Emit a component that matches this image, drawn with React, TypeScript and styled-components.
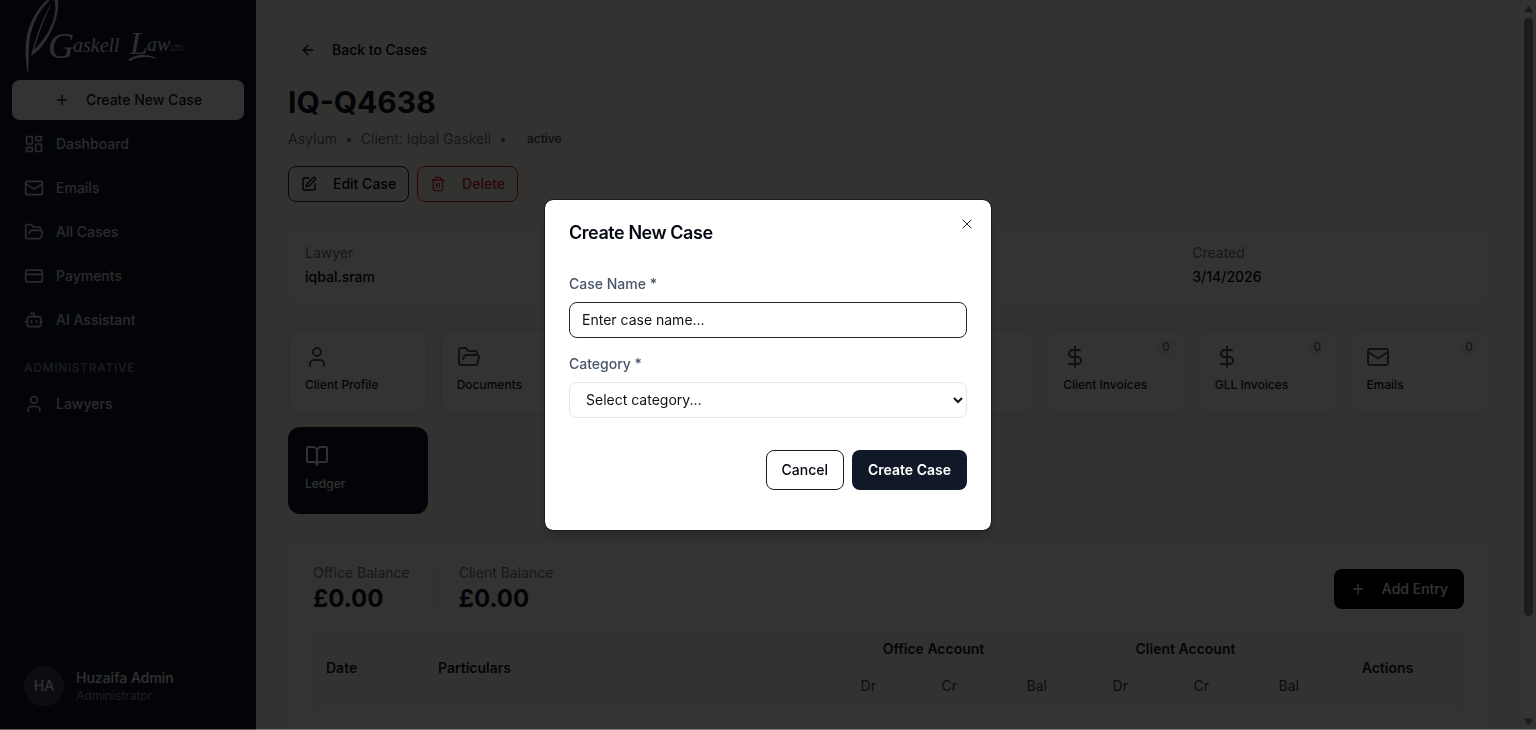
import React from "react";
import styled, { createGlobalStyle, css } from "styled-components";
import {
  ArrowLeft,
  BookOpen,
  Bot,
  CreditCard,
  DollarSign,
  FolderOpen,
  LayoutDashboard,
  Mail,
  Plus,
  SquarePen,
  Trash2,
  User,
  X,
  type LucideIcon,
} from "lucide-react";

const GlobalStyle = createGlobalStyle`
  *, *::before, *::after { box-sizing: border-box; }
  body {
    margin: 0;
    background: #faf9f5;
    color: #111827;
    font-family: Inter, "Liberation Sans", sans-serif;
    font-size: 14px;
    line-height: 20px;
  }
  button, input, select { font: inherit; color: inherit; }
  button { cursor: pointer; }
  h1, h2, p, dl, dd { margin: 0; }
`;

const Shell = styled.div`
  display: flex;
  height: 100vh;
  overflow: hidden;
`;

/* ---------- Sidebar ---------- */

const Sidebar = styled.aside`
  display: flex;
  flex-direction: column;
  flex: 0 0 256px;
  background: #111827;
  color: #d1d5db;
`;

const Brand = styled.div`
  height: 64px;
  padding-left: 24px;
  border-bottom: 1px solid #1a2231;
`;

const LogoArt = styled.svg`
  display: block;
  overflow: visible;
`;

const Nav = styled.nav`
  display: flex;
  flex-direction: column;
  flex: 1;
  gap: 4px;
  padding: 16px 12px;
`;

const NavLink = styled.a`
  display: flex;
  align-items: center;
  gap: 12px;
  height: 40px;
  padding: 0 12px;
  border-radius: 8px;
  color: #d1d5db;
  font-weight: 500;
  text-decoration: none;
`;

const NavHeading = styled.h2`
  padding: 16px 12px 4px;
  color: #7c8492;
  font-size: 12px;
  line-height: 16px;
  font-weight: 600;
  letter-spacing: 0.05em;
  text-transform: uppercase;
`;

const Account = styled.div`
  display: flex;
  align-items: center;
  gap: 12px;
  padding: 24px;
  border-top: 1px solid #1f2937;
`;

const Avatar = styled.div`
  display: grid;
  place-items: center;
  width: 40px;
  height: 40px;
  border-radius: 50%;
  background: #374151;
  color: #f3f4f6;
  font-weight: 500;
`;

const AccountName = styled.p`
  color: #f3f4f6;
  font-weight: 500;
`;

const AccountRole = styled.p`
  color: #8b93a1;
  font-size: 12px;
  line-height: 16px;
`;

/* ---------- Buttons ---------- */

type Tone = "light" | "ghost" | "outline" | "danger" | "black" | "navy";

const tones = {
  light: css`background: #ffffff; color: #111827;`,
  ghost: css`background: transparent; color: #030712;`,
  outline: css`background: transparent; border-color: #1c1c1c; color: #030712;`,
  danger: css`background: transparent; border-color: #dc2626; color: #dc2626;`,
  black: css`background: #000000; color: #ffffff;`,
  navy: css`background: #111827; color: #ffffff; font-weight: 600;`,
};

const Button = styled.button<{ $tone: Tone; $small?: boolean }>`
  display: inline-flex;
  align-items: center;
  justify-content: center;
  flex-shrink: 0;
  gap: 16px;
  height: ${(p) => (p.$small ? 36 : 40)}px;
  padding: 0 ${(p) => (p.$small ? 12 : 15)}px;
  border: 1px solid transparent;
  border-radius: 8px;
  font-weight: 500;
  white-space: nowrap;
  ${(p) => tones[p.$tone]}
`;

const BackButton = styled(Button)`
  align-self: flex-start;
  border: 0;
`;

/* ---------- Case page ---------- */

const Main = styled.main`
  display: flex;
  flex-direction: column;
  flex: 1;
  min-width: 0;
  padding: 32px;
`;

const CaseHeader = styled.header`
  display: flex;
  flex-direction: column;
  margin: 16px 0 24px;
`;

const CaseTitle = styled.h1`
  font-size: 30px;
  line-height: 36px;
  font-weight: 700;
`;

const CaseMeta = styled.div`
  display: flex;
  align-items: center;
  gap: 8px;
  margin: 8px 0 16px;
  color: #6b7280;
`;

const StatusBadge = styled.span`
  padding: 2px 11px;
  border: 1px solid #eeeeec;
  border-radius: 12px;
  background: #f9f8f4;
  color: #374151;
  font-size: 12px;
  line-height: 16px;
  font-weight: 500;
`;

const ButtonRow = styled.div<{ $end?: boolean }>`
  display: flex;
  align-items: center;
  justify-content: ${(p) => (p.$end ? "flex-end" : "flex-start")};
  gap: 8px;
`;

const Card = styled.section`
  border: 1px solid #f0f0ef;
  border-radius: 12px;
  background: #ffffff;
`;

const Facts = styled(Card)`
  display: grid;
  grid-template-columns: repeat(4, 1fr);
  gap: 16px;
  margin-bottom: 24px;
  padding: 16px;
`;

const Fact = styled.dl<{ $column: number }>`
  grid-column: ${(p) => p.$column};
  display: flex;
  flex-direction: column;
  gap: 4px;
`;

const Term = styled.dt`
  color: #6b7280;
`;

const Detail = styled.dd`
  color: #030712;
  font-weight: 500;
`;

const Tabs = styled.div`
  display: grid;
  grid-template-columns: repeat(8, 1fr);
  gap: 12px;
  margin-bottom: 24px;
`;

const Tab = styled.button<{ $active?: boolean }>`
  position: relative;
  display: flex;
  flex-direction: column;
  align-items: flex-start;
  gap: 8px;
  height: 87px;
  padding: 15px;
  border: 2px solid ${(p) => (p.$active ? "#111827" : "#f0f0ef")};
  border-radius: 12px;
  background: ${(p) => (p.$active ? "#111827" : "#ffffff")};
  color: ${(p) => (p.$active ? "#f3f4f6" : "#111827")};
  font-size: 12px;
  line-height: 16px;
  font-weight: 500;
`;

const TabIcon = styled.span<{ $active?: boolean }>`
  display: flex;
  color: ${(p) => (p.$active ? "#f3f4f6" : "#4b5563")};
`;

const TabCount = styled.span`
  position: absolute;
  top: 7px;
  right: 8px;
  min-width: 20px;
  border-radius: 10px;
  background: #f3f4f6;
  color: #4b5563;
  line-height: 20px;
  font-weight: 400;
  text-align: center;
`;

const LedgerCard = styled(Card)`
  padding: 24px;
`;

const LedgerHeader = styled.div`
  display: flex;
  align-items: center;
  justify-content: space-between;
  margin-bottom: 15px;
`;

const Balances = styled.div`
  display: flex;
  align-items: center;
  gap: 24px;
`;

const Divider = styled.div`
  width: 1px;
  height: 40px;
  background: #e5e7eb;
`;

const Amount = styled.p`
  font-size: 24px;
  line-height: 32px;
  font-weight: 700;
`;

const BalanceLabel = styled.p`
  color: #6b7280;
`;

const TableFrame = styled.div`
  overflow: hidden;
  border: 1px solid #eeeeee;
  border-radius: 8px;
`;

const LedgerTable = styled.table`
  width: 100%;
  border-collapse: separate;
  border-spacing: 0;
  table-layout: fixed;
`;

const Head = styled.th<{ $align?: string; $sub?: boolean; $last?: boolean }>`
  height: 37px;
  padding: 0 12px;
  border: solid #eeeeee;
  border-width: 0 ${(p) => (p.$last ? 0 : 1)}px 1px 0;
  background: #f9fafb;
  color: ${(p) => (p.$sub ? "#374151" : "#111827")};
  font-weight: ${(p) => (p.$sub ? 400 : 600)};
  text-align: ${(p) => p.$align ?? "left"};
`;

const EmptyCell = styled.td`
  height: 96px;
`;

/* ---------- Scrollbar ---------- */

const ScrollTrack = styled.div`
  display: flex;
  flex-direction: column;
  align-items: center;
  flex: 0 0 15px;
  padding: 5px 0 4px;
  background: #fcfcfc;
`;

const ScrollThumb = styled.div`
  flex: 0 0 83%;
  width: 9px;
  margin: 5px 0 auto;
  border-radius: 5px;
  background: #8b8b8b;
`;

/* ---------- Dialog ---------- */

const Overlay = styled.div`
  position: fixed;
  inset: 0;
  display: grid;
  place-items: center;
  border-bottom: 1px solid rgba(255, 255, 255, 0.35);
  background: rgba(0, 0, 0, 0.8);
`;

const Dialog = styled.div`
  position: relative;
  width: 448px;
  max-width: 100%;
  padding: 24px 24px 40px;
  border: 1px solid #1c1c1c;
  border-radius: 9px;
  background: #ffffff;
  background-clip: padding-box;
  box-shadow: 0 10px 15px -3px rgba(0, 0, 0, 0.2);
`;

const DialogTitle = styled.h2`
  margin-bottom: 32px;
  color: #030712;
  font-size: 18px;
  line-height: 18px;
  font-weight: 600;
  letter-spacing: -0.025em;
`;

const CloseButton = styled.button`
  position: absolute;
  top: 16px;
  right: 16px;
  display: flex;
  padding: 0;
  border: 0;
  background: none;
  color: #262626;
`;

const Form = styled.form`
  display: flex;
  flex-direction: column;
  gap: 16px;
`;

const Field = styled.div`
  display: flex;
  flex-direction: column;
  gap: 8px;
`;

const Label = styled.label`
  color: #475569;
  font-weight: 500;
`;

const TextInput = styled.input`
  height: 36px;
  padding: 0 12px;
  border: 1px solid #262626;
  border-radius: 8px;
  background: #ffffff;
  outline: none;
  &::placeholder { color: #111111; opacity: 1; }
`;

const Select = styled.select`
  height: 36px;
  padding: 0 12px;
  border: 1px solid #e5e7eb;
  border-radius: 8px;
  background: #ffffff;
  color: #111111;
`;

const DialogActions = styled(ButtonRow)`
  margin-top: 16px;
`;

/* ---------- Data ---------- */

const navItems: { label: string; icon: LucideIcon }[] = [
  { label: "Dashboard", icon: LayoutDashboard },
  { label: "Emails", icon: Mail },
  { label: "All Cases", icon: FolderOpen },
  { label: "Payments", icon: CreditCard },
  { label: "AI Assistant", icon: Bot },
];

const tabs: { label?: string; icon?: LucideIcon; count?: number; active?: boolean }[] = [
  { label: "Client Profile", icon: User },
  { label: "Documents", icon: FolderOpen },
  {},
  {},
  {},
  { label: "Client Invoices", icon: DollarSign, count: 0 },
  { label: "GLL Invoices", icon: DollarSign, count: 0 },
  { label: "Emails", icon: Mail, count: 0 },
  { label: "Ledger", icon: BookOpen, active: true },
];

const subHeads = ["Dr", "Cr", "Bal", "Dr", "Cr", "Bal"];

function Logo() {
  return (
    <LogoArt width="160" height="76" viewBox="24 0 160 76" role="img" aria-label="Gaskell Law LTD">
      <g fill="#e5e7eb">
        <path d="M50 -3C39 6 29 22 26.500 38C24.500 52 26 64 28 74C29.200 64 28 54 29.500 40C32 24 39 10 51 -1Z" />
        <path d="M57 -4C61 8 55 27 45 42C41 48 36 53 31 56C34 44 40 22 52 2C43 22 37 38 34 50C44 40 53 27 55 12C56 6 55 1 53 -3Z" />
        <path d="M128 60C134 54 150 53 157 59C149 56 138 56 130 61Z" />
      </g>
      <g fill="#e5e7eb" fontFamily="'Liberation Serif', serif" fontStyle="italic" fontSize="20">
        <text x="48" y="58" fontSize="36">G</text>
        <text x="73" y="52">askell</text>
        <text x="130" y="54" fontSize="32">L</text>
        <text x="147" y="51">aw</text>
      </g>
      <text x="171" y="51" fill="#b4b9c2" fontFamily="Lato, sans-serif" fontSize="7">LTD</text>
    </LogoArt>
  );
}

export default function App() {
  return (
    <>
      <GlobalStyle />
      <Shell>
        <Sidebar>
          <Brand>
            <Logo />
          </Brand>
          <Nav>
            <Button $tone="light">
              <Plus size={16} />
              Create New Case
            </Button>
            {navItems.map(({ label, icon: Icon }) => (
              <NavLink key={label} href="#">
                <Icon size={20} />
                {label}
              </NavLink>
            ))}
            <NavHeading>Administrative</NavHeading>
            <NavLink href="#">
              <User size={20} />
              Lawyers
            </NavLink>
          </Nav>
          <Account>
            <Avatar>HA</Avatar>
            <div>
              <AccountName>Huzaifa Admin</AccountName>
              <AccountRole>Administrator</AccountRole>
            </div>
          </Account>
        </Sidebar>

        <Main>
          <BackButton $tone="ghost" $small>
            <ArrowLeft size={16} />
            Back to Cases
          </BackButton>
          <CaseHeader>
            <CaseTitle>IQ-Q4638</CaseTitle>
            <CaseMeta>
              <span>Asylum</span>
              <span>•</span>
              <span>Client: Iqbal Gaskell</span>
              <span>•</span>
              <StatusBadge>active</StatusBadge>
            </CaseMeta>
            <ButtonRow>
              <Button $tone="outline" $small>
                <SquarePen size={16} />
                Edit Case
              </Button>
              <Button $tone="danger" $small>
                <Trash2 size={16} />
                Delete
              </Button>
            </ButtonRow>
          </CaseHeader>

          <Facts>
            <Fact $column={1}>
              <Term>Lawyer</Term>
              <Detail>iqbal.sram</Detail>
            </Fact>
            <Fact $column={4}>
              <Term>Created</Term>
              <Detail>3/14/2026</Detail>
            </Fact>
          </Facts>

          <Tabs>
            {tabs.map(({ label, icon: Icon, count, active }, i) => (
              <Tab key={i} $active={active}>
                {Icon && (
                  <TabIcon $active={active}>
                    <Icon size={24} />
                  </TabIcon>
                )}
                {label}
                {count !== undefined && <TabCount>{count}</TabCount>}
              </Tab>
            ))}
          </Tabs>

          <LedgerCard>
            <LedgerHeader>
              <Balances>
                <div>
                  <BalanceLabel>Office Balance</BalanceLabel>
                  <Amount>£0.00</Amount>
                </div>
                <Divider />
                <div>
                  <BalanceLabel>Client Balance</BalanceLabel>
                  <Amount>£0.00</Amount>
                </div>
              </Balances>
              <Button $tone="black">
                <Plus size={16} />
                Add Entry
              </Button>
            </LedgerHeader>
            <TableFrame>
              <LedgerTable>
                <colgroup>
                  {["112px", "auto", "81px", "81px", "90px", "81px", "81px", "90px", "151px"].map(
                    (width, i) => (
                      <col key={i} style={{ width }} />
                    ),
                  )}
                </colgroup>
                <thead>
                  <tr>
                    <Head rowSpan={2}>Date</Head>
                    <Head rowSpan={2}>Particulars</Head>
                    <Head colSpan={3} $align="center">Office Account</Head>
                    <Head colSpan={3} $align="center">Client Account</Head>
                    <Head rowSpan={2} $align="center" $last>Actions</Head>
                  </tr>
                  <tr>
                    {subHeads.map((label, i) => (
                      <Head key={i} $align="right" $sub>{label}</Head>
                    ))}
                  </tr>
                </thead>
                <tbody>
                  <tr>
                    <EmptyCell colSpan={9} />
                  </tr>
                </tbody>
              </LedgerTable>
            </TableFrame>
          </LedgerCard>
        </Main>

        <ScrollTrack aria-hidden="true">
          <svg width="9" height="8" viewBox="0 0 9 8">
            <path d="M4.500 1L8.500 7H0.500Z" fill="#8b8b8b" stroke="#8b8b8b" strokeLinejoin="round" />
          </svg>
          <ScrollThumb />
          <svg width="9" height="8" viewBox="0 0 9 8">
            <path d="M4.500 7L8.500 1H0.500Z" fill="#8b8b8b" stroke="#8b8b8b" strokeLinejoin="round" />
          </svg>
        </ScrollTrack>
      </Shell>

      <Overlay>
        <Dialog role="dialog" aria-modal="true" aria-labelledby="dialog-title">
          <DialogTitle id="dialog-title">Create New Case</DialogTitle>
          <Form onSubmit={(e) => e.preventDefault()}>
            <Field>
              <Label htmlFor="case-name">Case Name *</Label>
              <TextInput id="case-name" placeholder="Enter case name..." />
            </Field>
            <Field>
              <Label htmlFor="category">Category *</Label>
              <Select id="category" defaultValue="">
                <option value="">Select category...</option>
              </Select>
            </Field>
            <DialogActions $end>
              <Button type="button" $tone="outline">Cancel</Button>
              <Button type="submit" $tone="navy">Create Case</Button>
            </DialogActions>
          </Form>
          <CloseButton type="button" aria-label="Close">
            <X size={16} strokeWidth={1.5} />
          </CloseButton>
        </Dialog>
      </Overlay>
    </>
  );
}
